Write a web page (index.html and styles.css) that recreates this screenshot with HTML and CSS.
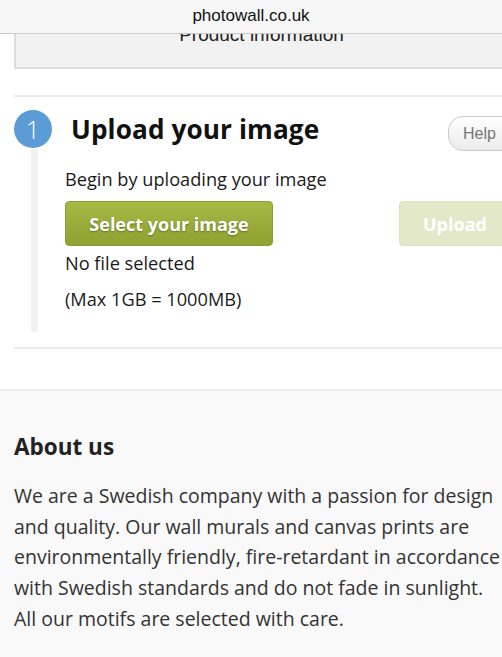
FILE: index.html
```html
<!DOCTYPE html>
<html>
<head>
<meta charset="utf-8">
<link rel="stylesheet" href="styles.css">
</head>
<body>
<div class="urlbar">photowall.co.uk</div>
<div class="page">
  <div class="product-box"><span>Product information</span></div>
  <div class="rule first"></div>
  <section class="step">
    <div class="step-head">
      <div class="badge">1</div>
      <h2>Upload your image</h2>
      <button class="help">Help</button>
    </div>
    <div class="step-body">
      <div class="rail"></div>
      <div class="step-content">
        <p class="intro">Begin by uploading your image</p>
        <div class="buttons">
          <button class="btn select">Select your image</button>
          <button class="btn upload">Upload</button>
        </div>
        <p class="status">No file selected</p>
        <p class="max">(Max 1GB = 1000MB)</p>
      </div>
    </div>
  </section>
  <div class="rule second"></div>
</div>
<section class="about">
  <h3>About us</h3>
  <p>We are a Swedish company with a passion for design and quality. Our wall murals and canvas prints are environmentally friendly, fire-retardant in accordance with Swedish standards and do not fade in sunlight. All our motifs are selected with care.</p>
</section>
</body>
</html>
```
FILE: styles.css
```css
html, body {
  margin: 0;
  padding: 0;
  background: #ffffff;
  overflow: hidden;
}
body {
  width: 502px;
  height: 657px;
  position: relative;
  font-family: "Open Sans", sans-serif;
  color: #1a1a1a;
}
.urlbar {
  position: absolute;
  left: 0;
  top: 0;
  width: 502px;
  height: 33px;
  background: #f7f7f7;
  border-bottom: 1px solid #c9c9c9;
  font-family: "Liberation Sans", Arial, sans-serif;
  font-size: 17px;
  color: #111;
  text-align: center;
  line-height: 32px;
  z-index: 5;
}
.page {
  padding-left: 14px;
  width: 540px;
}
.product-box {
  height: 69px;
  width: 493px;
  background: #f2f2f2;
  border-left: 2px solid #dddddd;
  border-bottom: 2px solid #dddddd;
  box-sizing: border-box;
  font-family: "Liberation Sans", Arial, sans-serif;
  font-size: 19px;
  color: #222;
  text-align: center;
  padding-top: 24px;
}
.rule {
  height: 2px;
  background: #ececec;
}
.rule.first {
  margin-top: 26px;
}
.step {
  padding-top: 12px;
}
.step-head {
  display: flex;
  align-items: center;
  height: 40px;
}
.badge {
  width: 38px;
  height: 38px;
  border-radius: 50%;
  background: #5b9bd6;
  color: #fff;
  font-size: 25px;
  font-weight: 300;
  display: flex;
  align-items: center;
  justify-content: center;
  line-height: 1;
  flex: none;
}
.step-head h2 {
  margin: 0 0 0 19px;
  font-size: 26.2px;
  font-weight: 700;
  color: #111;
  letter-spacing: 0.1px;
  width: 377px;
  flex: none;
}
.help {
  height: 35px;
  width: 80px;
  flex: none;
  border: 1px solid #c9c9c9;
  border-radius: 15px;
  background: linear-gradient(#ffffff, #ececec);
  font-family: "Liberation Sans", Arial, sans-serif;
  font-size: 16px;
  color: #777;
  text-align: left;
  padding-left: 14px;
  margin-top: 9px;
}
.step-body {
  display: flex;
}
.rail {
  width: 7px;
  margin-left: 17px;
  background: #f1f1f1;
  height: 183px;
  flex: none;
}
.step-content {
  padding-left: 27px;
  padding-top: 18px;
}
.step-content p {
  margin: 0;
  font-size: 18.2px;
  color: #1a1a1a;
}
.buttons {
  display: flex;
  margin-top: 10px;
}
.btn {
  height: 45px;
  border-radius: 4px;
  font-family: "Open Sans", sans-serif;
  font-weight: 700;
  font-size: 18px;
  color: #fff;
  text-shadow: 0 1px 2px rgba(0,0,0,0.35);
  border: 1px solid #8d9f32;
}
.select {
  width: 208px;
  background: linear-gradient(#a6b945, #8fa232);
}
.upload {
  margin-left: 126px;
  width: 120px;
  background: #e3e8c9;
  border-color: #dde3c0;
  text-shadow: none;
  text-align: left;
  padding-left: 23px;
}
.status {
  margin-top: 5px !important;
}
.max {
  margin-top: 12px !important;
}
.rule.second {
  margin-top: 15px;
}
.about {
  margin-top: 40px;
  border-top: 2px solid #ececec;
  background: #f9f9f9;
  padding: 40px 0 40px 14px;
  width: 540px;
  height: 300px;
}
.about h3 {
  margin: 0;
  font-size: 22.5px;
  font-weight: 700;
  color: #222;
}
.about p {
  margin: 19px 0 0 0;
  width: 492px;
  font-size: 19.5px;
  line-height: 30.7px;
  color: #333;
}
```
